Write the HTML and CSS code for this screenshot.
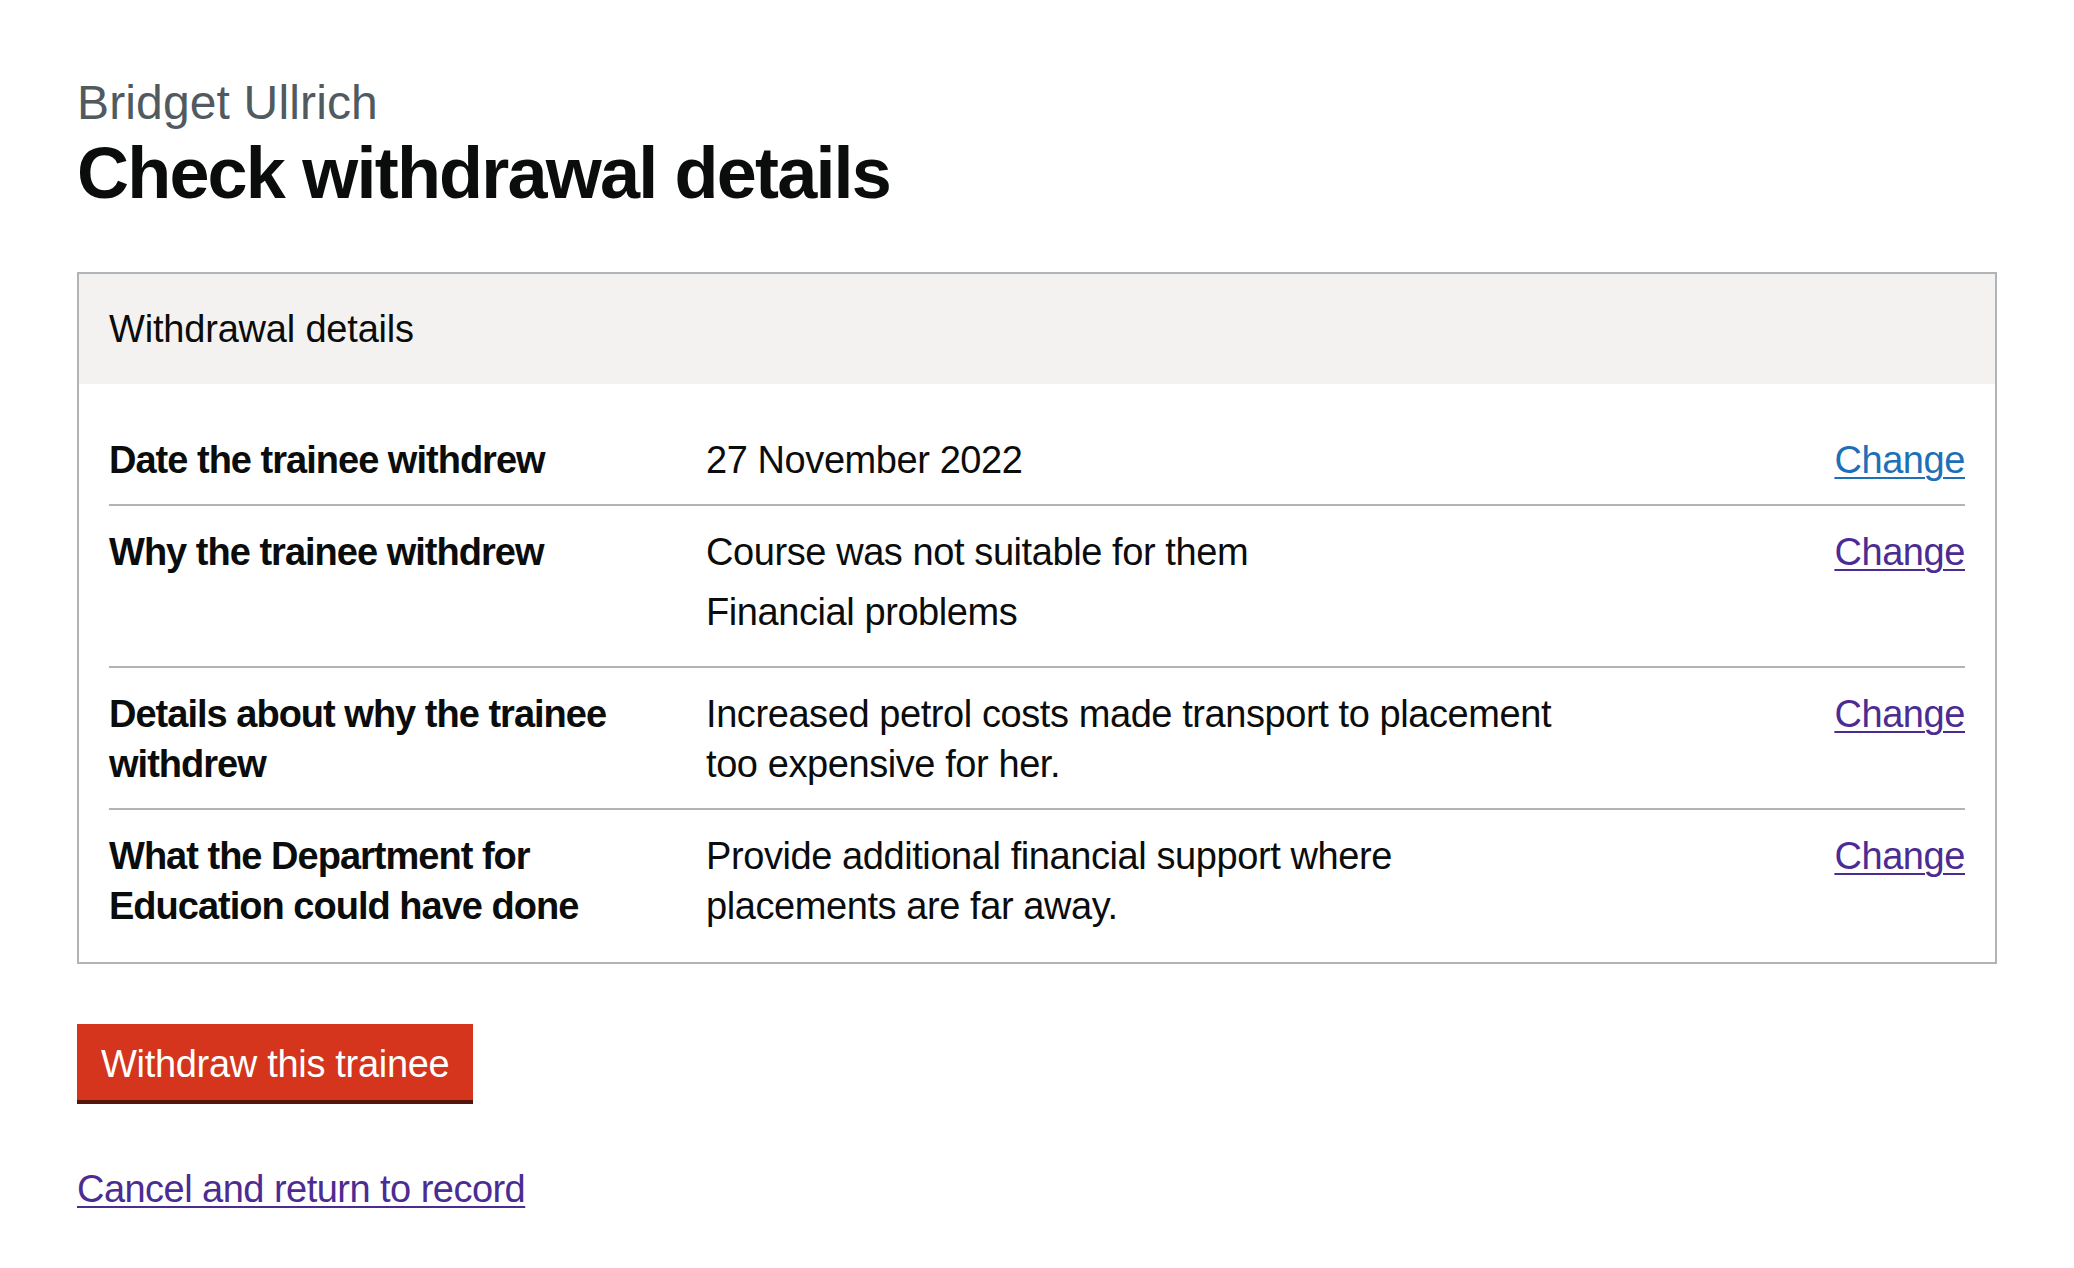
FILE: index.html
```html
<!DOCTYPE html>
<html lang="en">
<head>
<meta charset="utf-8">
<title>Check withdrawal details</title>
<link rel="stylesheet" href="styles.css">
</head>
<body>
<main class="container">
  <span class="caption">Bridget Ullrich</span>
  <h1 class="heading">Check withdrawal details</h1>

  <section class="card">
    <div class="card-header">
      <h2 class="card-title">Withdrawal details</h2>
    </div>
    <div class="card-content">
      <dl class="summary">
        <div class="row">
          <dt class="key">Date the trainee withdrew</dt>
          <dd class="value">27 November 2022</dd>
          <dd class="actions"><a class="link" href="#">Change</a></dd>
        </div>
        <div class="row">
          <dt class="key">Why the trainee withdrew</dt>
          <dd class="value">
            <p class="value-para">Course was not suitable for them</p>
            <p class="value-para">Financial problems</p>
          </dd>
          <dd class="actions"><a class="link link-visited" href="#">Change</a></dd>
        </div>
        <div class="row">
          <dt class="key">Details about why the trainee withdrew</dt>
          <dd class="value">Increased petrol costs made transport to placement too expensive for her.</dd>
          <dd class="actions"><a class="link link-visited" href="#">Change</a></dd>
        </div>
        <div class="row">
          <dt class="key">What the Department for Education could have done</dt>
          <dd class="value">Provide additional financial support where placements are far away.</dd>
          <dd class="actions"><a class="link link-visited" href="#">Change</a></dd>
        </div>
      </dl>
    </div>
  </section>

  <button class="button button-warning" type="button">Withdraw this trainee</button>

  <p class="body-text"><a class="link link-visited" href="#">Cancel and return to record</a></p>
</main>
</body>
</html>
```

FILE: styles.css
```css
html, body {
  margin: 0;
  padding: 0;
  background: #ffffff;
}

body {
  font-family: "Liberation Sans", Arial, sans-serif;
  color: #0b0c0c;
  font-size: 38px;
  line-height: 50px;
  letter-spacing: -0.011em;
}

.container {
  width: 1920px;
  margin: 0 auto;
  padding-top: 73px;
}

.caption {
  display: block;
  font-size: 48px;
  line-height: 60px;
  color: #505a5f;
  letter-spacing: 0.003em;
  margin-bottom: 0;
}

.heading {
  margin: 0 0 59px;
  font-size: 72px;
  line-height: 80px;
  font-weight: 700;
  letter-spacing: -0.025em;
}

.card {
  border: 2px solid #b1b4b6;
  margin-bottom: 60px;
}

.card-header {
  background: #f3f2f1;
  padding: 30px;
}

.card-title {
  margin: 0;
  font-size: 38px;
  line-height: 50px;
  font-weight: 400;
  letter-spacing: -0.005em;
}

.card-content {
  padding: 30px 30px 31px;
}

.summary {
  margin: 0;
}

.row {
  display: grid;
  grid-template-columns: 597px 902px 1fr;
  border-bottom: 2px solid #b1b4b6;
}

.row:last-child {
  border-bottom: none;
}

.key,
.value,
.actions {
  margin: 0;
  padding: 21px 0 19px;
}

.row:last-child .key,
.row:last-child .value,
.row:last-child .actions {
  padding-bottom: 0;
}

.key {
  font-weight: 700;
  padding-right: 40px;
  letter-spacing: -0.026em;
}

.value {
  padding-right: 40px;
}

.value-para {
  margin: 0 0 10px;
}

.actions {
  text-align: right;
}

.link {
  color: #1d70b8;
  text-decoration: underline;
  text-decoration-thickness: 2px;
  text-underline-offset: 4px;
}

.link-visited {
  color: #4c2c92;
}

.button {
  display: inline-block;
  font-family: "Liberation Sans", Arial, sans-serif;
  font-size: 38px;
  line-height: 38px;
  letter-spacing: -0.008em;
  padding: 17px 20px 13px;
  border: 4px solid transparent;
  border-radius: 0;
  margin: 0 0 64px;
  cursor: pointer;
}

.button-warning {
  background: #d4351c;
  color: #ffffff;
  box-shadow: 0 4px 0 #55150b;
}

.body-text {
  margin: 0;
  font-size: 38px;
  line-height: 50px;
  letter-spacing: -0.014em;
}
```
